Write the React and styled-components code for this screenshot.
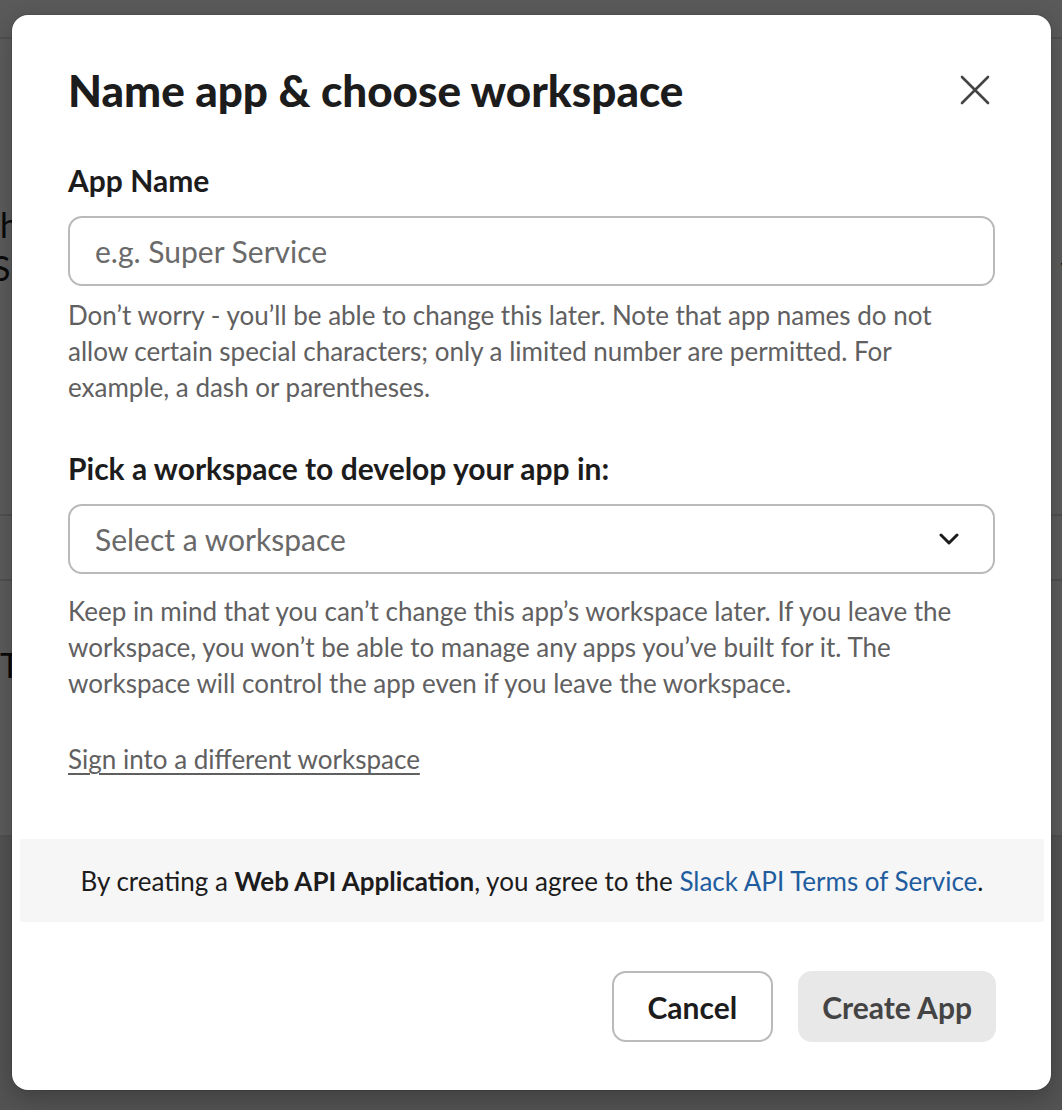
import styled, { createGlobalStyle } from "styled-components";

const GlobalStyle = createGlobalStyle`
  * { box-sizing: border-box; }
  html, body { margin: 0; padding: 0; }
  body {
    font-family: Lato, "Noto Sans", "Liberation Sans", sans-serif;
    background: #fff;
    color: #1d1c1d;
  }
`;

/* the page that sits behind the dimmed overlay */
const Page = styled.div`
  position: relative;
  width: 1062px;
  height: 1110px;
  overflow: hidden;
  background: #fff;
`;

const PageHeader = styled.div`
  height: 39px;
  border-bottom: 2px solid #ddd;
  background: #fafafa;
`;

const PageRow = styled.div`
  display: flex;
  justify-content: space-between;
  font-size: 34px;
  line-height: 43px;
  color: #1d1c1d;
`;

const PageBlock = styled.div`
  padding-top: ${(p) => p.$top}px;
  height: ${(p) => p.$height}px;
  border-bottom: ${(p) => (p.$line ? "2px solid #ddd" : "none")};
`;

const PageFooter = styled.div`
  height: 300px;
  background: #e6e6e6;
`;

const Overlay = styled.div`
  position: absolute;
  inset: 0;
  background: rgba(0, 0, 0, 0.64);
`;

const Modal = styled.div`
  position: absolute;
  left: 12px;
  top: 15px;
  width: 1039px;
  height: 1075px;
  background: #fff;
  border-radius: 16px;
  box-shadow: 0 0 0 1px rgba(0, 0, 0, 0.08), 0 8px 24px rgba(0, 0, 0, 0.25);
  display: flex;
  flex-direction: column;
`;

const Body = styled.div`
  padding: 47px 56px 0 56px;
  flex: 1;
`;

const TitleBar = styled.div`
  display: flex;
  align-items: center;
  justify-content: space-between;
`;

const Title = styled.h1`
  margin: 0;
  font-size: 44px;
  line-height: 56px;
  font-weight: 900;
  color: #1d1c1d;
`;

const CloseButton = styled.button`
  border: none;
  background: none;
  padding: 0;
  margin-right: 3px;
  width: 34px;
  height: 34px;
  display: flex;
  align-items: center;
  justify-content: center;
  cursor: pointer;
`;

const Label = styled.label`
  display: block;
  margin-top: ${(p) => p.$top}px;
  font-size: 30px;
  line-height: 36px;
  font-weight: 700;
  color: #1d1c1d;
`;

const Field = styled.div`
  margin-top: 18px;
  height: 70px;
  border: 2px solid #bbbabb;
  border-radius: 14px;
  display: flex;
  align-items: center;
  justify-content: space-between;
  padding: 0 34px 0 25px;
  font-size: 30px;
  color: #696969;
`;

const Input = styled.input`
  border: none;
  outline: none;
  width: 100%;
  font: inherit;
  color: #1d1c1d;
  background: transparent;
  padding: 0;
  &::placeholder { color: #6a6a6a; }
`;

const Help = styled.p`
  margin: ${(p) => p.$top}px 0 0;
  font-size: 26px;
  line-height: 36px;
  color: #616061;
`;

const Link = styled.a`
  display: inline-block;
  margin-top: 40px;
  font-size: 26px;
  line-height: 36px;
  color: #616061;
  text-decoration: underline;
  text-decoration-thickness: 2px;
  text-underline-offset: 4px;
`;

const Terms = styled.div`
  margin: 0 7px 0 8px;
  height: 83px;
  background: #f6f6f6;
  display: flex;
  align-items: center;
  justify-content: center;
  font-size: 26px;
  color: #1d1c1d;
  b { font-weight: 700; }
`;

const TermsLink = styled.a`
  color: #1f5d9f;
  text-decoration: none;
`;

const Actions = styled.div`
  display: flex;
  justify-content: flex-end;
  gap: 25px;
  padding: 49px 55px 48px;
`;

const Button = styled.button`
  height: 71px;
  padding: 0 ${(p) => (p.$primary ? 24 : 34)}px;
  border-radius: 14px;
  font-family: inherit;
  font-size: 30px;
  font-weight: 700;
  border: ${(p) => (p.$primary ? "none" : "2px solid #bbbabb")};
  background: ${(p) => (p.$primary ? "#e8e8e8" : "#fff")};
  color: ${(p) => (p.$primary ? "#454445" : "#1d1c1d")};
  cursor: pointer;
`;

const CloseIcon = () => (
  <svg width="30" height="30" viewBox="0 0 30 30" fill="none">
    <path d="M2 2 L28 28 M28 2 L2 28" stroke="#454445" strokeWidth="2.6" strokeLinecap="round" />
  </svg>
);

const Chevron = () => (
  <svg width="20" height="12" viewBox="0 0 20 12" fill="none">
    <path d="M2 2 L10 10 L18 2" stroke="#1d1c1d" strokeWidth="3" strokeLinecap="round" strokeLinejoin="round" />
  </svg>
);

const App = () => {
  return (
    <Page>
      <GlobalStyle />
      <PageHeader />
      <PageBlock $top={164} $height={477} $line>
        <PageRow>
          <span>h</span>
          <span style={{ marginRight: -12 }}>r</span>
        </PageRow>
        <PageRow>
          <span style={{ marginLeft: -8 }}>S</span>
          <span style={{ marginRight: -16 }}>y</span>
        </PageRow>
      </PageBlock>
      <PageBlock $top={0} $height={65} $line />
      <PageBlock $top={62} $height={256} $line>
        <PageRow>
          <span>T</span>
        </PageRow>
      </PageBlock>
      <PageFooter />
      <Overlay />
      <Modal>
        <Body>
          <TitleBar>
            <Title>Name app &amp; choose workspace</Title>
            <CloseButton aria-label="Close">
              <CloseIcon />
            </CloseButton>
          </TitleBar>
          <Label $top={44}>App Name</Label>
          <Field>
            <Input placeholder="e.g. Super Service" />
          </Field>
          <Help $top={11}>
            Don’t worry - you’ll be able to change this later. Note that app names do not
            allow certain special characters; only a limited number are permitted. For
            example, a dash or parentheses.
          </Help>
          <Label $top={45}>Pick a workspace to develop your app in:</Label>
          <Field>
            <span>Select a workspace</span>
            <Chevron />
          </Field>
          <Help $top={19}>
            Keep in mind that you can’t change this app’s workspace later. If you leave the
            workspace, you won’t be able to manage any apps you’ve built for it. The
            workspace will control the app even if you leave the workspace.
          </Help>
          <Link href="#">Sign into a different workspace</Link>
        </Body>
        <Terms>
          <span>
            By creating a <b>Web API Application</b>, you agree to the{" "}
            <TermsLink href="#">Slack API Terms of Service</TermsLink>.
          </span>
        </Terms>
        <Actions>
          <Button>Cancel</Button>
          <Button $primary>Create App</Button>
        </Actions>
      </Modal>
    </Page>
  );
};

export default App;
